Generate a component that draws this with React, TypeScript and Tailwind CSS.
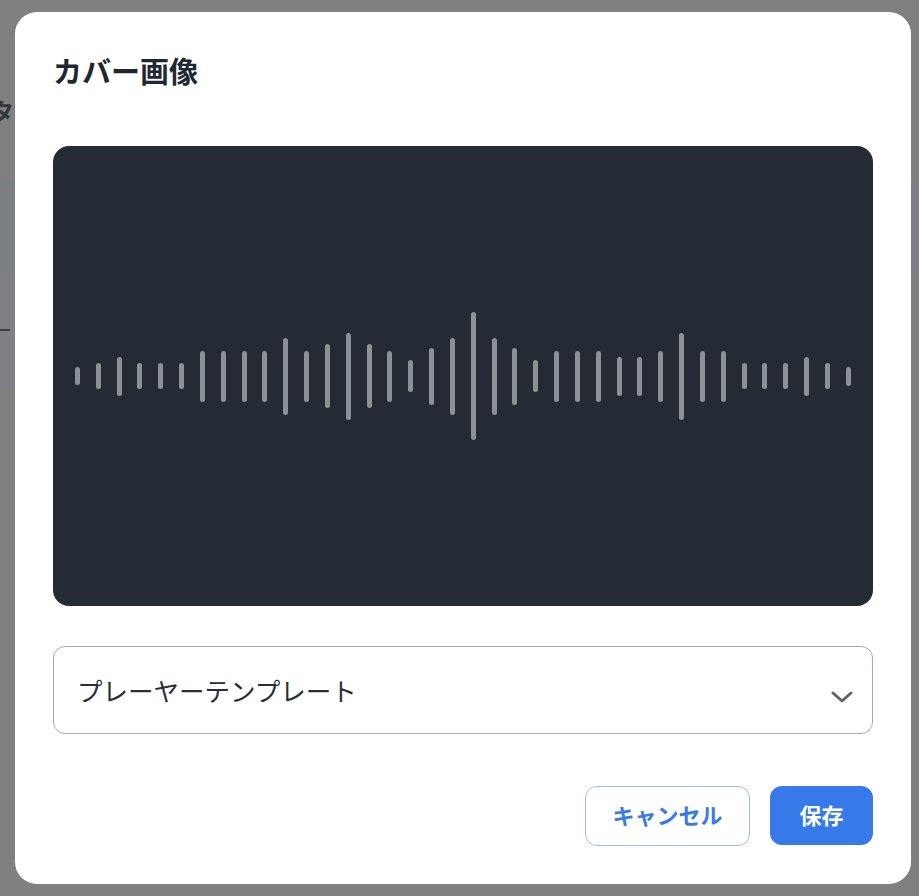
const bars = [
  18, 26, 39, 26, 26, 26, 51, 51, 51, 51, 77, 51, 64, 87, 64, 51, 32, 57, 77, 128,
  77, 57, 32, 51, 51, 51, 39, 39, 51, 87, 51, 51, 26, 26, 26, 39, 26, 19,
];

const jp = { fontFamily: '"Noto Sans CJK JP", "Noto Sans", sans-serif' };

function Waveform() {
  return (
    <div className="flex h-[460px] items-center justify-between rounded-[16px] bg-[#252b35] px-[22px]">
      {bars.map((h, i) => (
        <div key={i} className="w-[5px] rounded-full bg-[#8d9196]" style={{ height: h }} />
      ))}
    </div>
  );
}

export default function App() {
  return (
    <div className="relative h-[896px] w-full overflow-hidden bg-[#808080]" style={jp}>
      {/* dimmed page behind the dialog */}
      <div className="flex flex-col">
        <div className="h-[96px]" />
        <div className="-ml-[10px] h-[84px] text-[24px] font-bold leading-[30px] text-[#33383f]">タ</div>
        <div className="h-[92px] bg-[#7b7e82]" />
        <div className="flex h-[116px] flex-col bg-[#7f8083] pt-[57px]">
          <div className="h-[2px] w-[10px] bg-[#3a3e44]" />
        </div>
        <div className="flex-1 bg-[#7e7f82]" />
      </div>

      <div className="absolute left-[15px] top-[12px] flex h-[872px] w-[896px] flex-col rounded-[22px] bg-white px-[38px] pt-[40px]">
        <h2 className="text-[29px] font-bold leading-[36px] text-[#1f2733]">カバー画像</h2>

        <div className="mt-[58px]">
          <Waveform />
        </div>

        <button className="mt-[40px] flex h-[88px] items-center justify-between rounded-[12px] border border-[#a3abb9] bg-white pl-[23px] pr-[19px] text-left">
          <span className="text-[25.5px] leading-[32px] text-[#2a2f36]">プレーヤーテンプレート</span>
          <svg width="22" height="12" viewBox="0 0 22 12" className="mt-[13px]" fill="none">
            <polyline
              points="2,2 11,10 20,2"
              stroke="#5b6571"
              strokeWidth="3"
              strokeLinecap="round"
              strokeLinejoin="round"
            />
          </svg>
        </button>

        <div className="mt-[52px] flex justify-end gap-[20px]">
          <button className="flex h-[60px] w-[165px] items-center justify-center rounded-[12px] border border-[#9dbcf5] bg-white pb-[3px] text-[22px] font-bold text-[#3a7ae6]">
            キャンセル
          </button>
          <button className="flex h-[59px] w-[103px] items-center justify-center rounded-[12px] bg-[#3879ea] pb-[3px] text-[22px] font-bold text-white">
            保存
          </button>
        </div>
      </div>
    </div>
  );
}
